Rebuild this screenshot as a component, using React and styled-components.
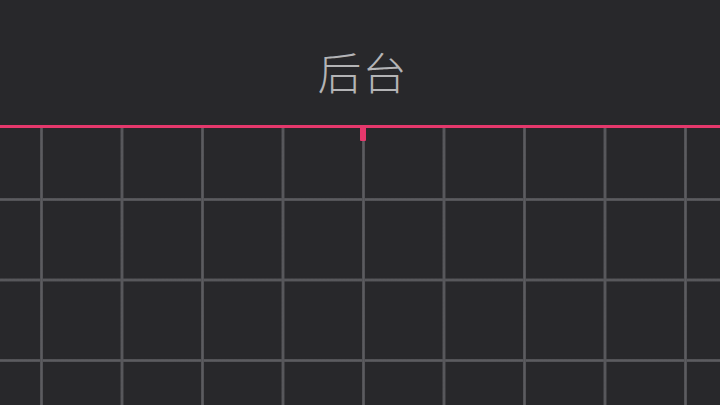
import React from 'react'
import styled, { createGlobalStyle } from 'styled-components';

const GlobalStyle = createGlobalStyle`
  html, body, #root {
    margin: 0;
    height: 100%;
  }
  body {
    background: #28282b;
    font-family: "Noto Sans CJK SC", "Noto Sans", sans-serif;
    overflow: hidden;
  }
`;

function App() {
  return (
    <>
      <GlobalStyle />
      <Screen>
        <Header>
          <Title>后台</Title>
        </Header>
        <Rule>
          <Marker />
        </Rule>
        <Grid />
      </Screen>
    </>
  )
}

const Screen = styled.div`
  display: flex;
  flex-direction: column;
  width: 100%;
  height: 100%;
  background: #28282b;
`;

const Header = styled.div`
  height: 125px;
  display: flex;
  align-items: center;
  justify-content: center;
  padding-left: 5px;
`;

const Title = styled.h1`
  margin: 0;
  margin-top: 16px;
  font-size: 44px;
  font-weight: 300;
  letter-spacing: 1px;
  color: #b4b4b6;
`;

const Rule = styled.div`
  position: relative;
  height: 3px;
  background: #e5386c;
`;

const Marker = styled.div`
  position: absolute;
  left: 360px;
  top: 0;
  width: 6px;
  height: 16px;
  border-radius: 0 0 1px 1px;
  background: #e5386c;
`;

const Grid = styled.div`
  flex: 1;
  background-color: #28282b;
  background-image:
    linear-gradient(to right, #4a4a4e 0, #5c5c60 1px, #5c5c60 2px, #4a4a4e 3px, transparent 3px),
    linear-gradient(to bottom, #4a4a4e 0, #5c5c60 1px, #5c5c60 2px, #4a4a4e 3px, transparent 3px);
  background-size: 80.5px 80.5px;
  background-position: 40px 70px;
`;

export default App;
